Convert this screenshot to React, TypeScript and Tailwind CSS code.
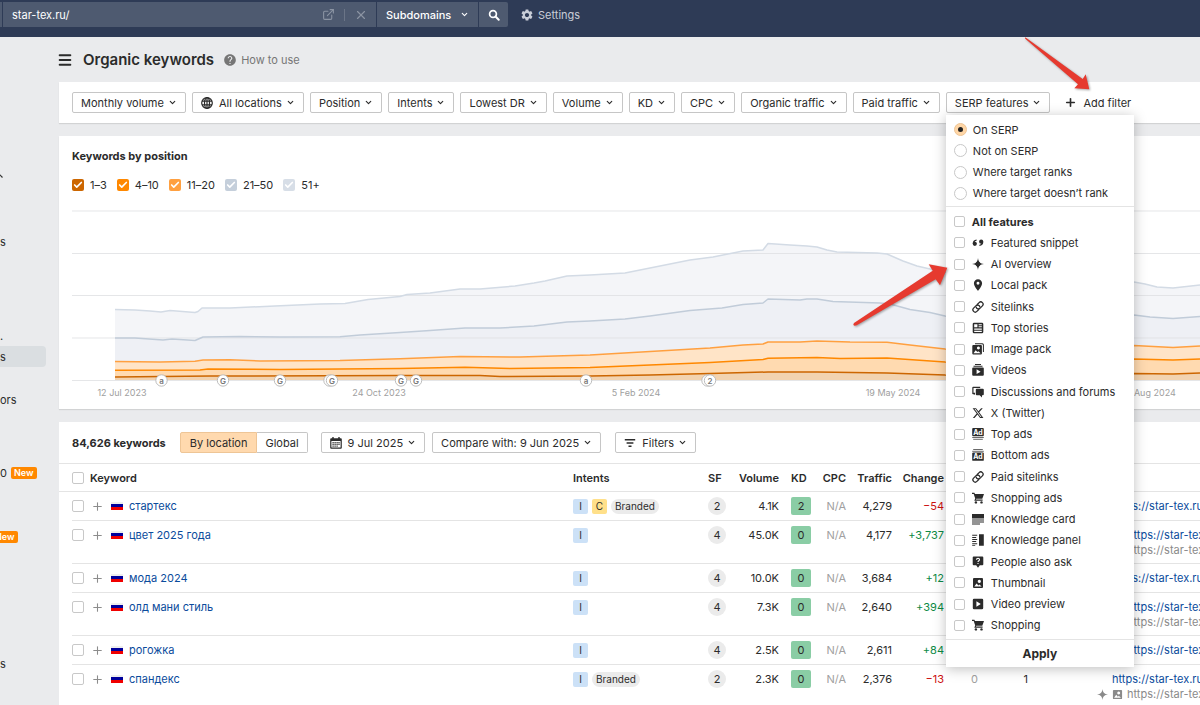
import { useState } from "react";
import type { ReactNode } from "react";
import { Check, ChevronDown, ExternalLink, Menu, Plus, X } from "lucide-react";
import { FaXTwitter } from "react-icons/fa6";
import { MdHelp, MdLocationOn, MdSettings } from "react-icons/md";
import { clsx } from "clsx";

type Row = {
  keyword: string;
  intents: string[];
  branded?: boolean;
  sf: number;
  volume: string;
  kd: number;
  traffic: string;
  change: string;
  tall?: boolean;
  urlIndent?: boolean;
};

const ROWS: Row[] = [
  { keyword: "стартекс", intents: ["I", "C"], branded: true, sf: 2, volume: "4.1K", kd: 2, traffic: "4,279", change: "−54" },
  { keyword: "цвет 2025 года", intents: ["I"], sf: 4, volume: "45.0K", kd: 0, traffic: "4,177", change: "+3,737", tall: true, urlIndent: true },
  { keyword: "мода 2024", intents: ["I"], sf: 4, volume: "10.0K", kd: 0, traffic: "3,684", change: "+12" },
  { keyword: "олд мани стиль", intents: ["I"], sf: 4, volume: "7.3K", kd: 0, traffic: "2,640", change: "+394", tall: true, urlIndent: true },
  { keyword: "рогожка", intents: ["I"], sf: 4, volume: "2.5K", kd: 0, traffic: "2,611", change: "+84", urlIndent: true },
  { keyword: "спандекс", intents: ["I"], branded: true, sf: 2, volume: "2.3K", kd: 0, traffic: "2,376", change: "−13", tall: true },
];

const SIDE_ITEMS = [
  { text: "s", className: "mt-[44px]" },
  { text: ".", className: "mt-[73px]" },
  { text: "s", className: "rounded-r-sm bg-[#dadee1]" },
  { text: "ors", className: "mt-[22px]" },
  { text: "0", badge: true, className: "mt-[52px]" },
  { text: "", badge: true, className: "mt-[43px]" },
  { text: "s", className: "mt-[106px]" },
];

const LEGEND = [
  { label: "1–3", color: "bg-[#cc6600]" },
  { label: "4–10", color: "bg-[#ff8800]" },
  { label: "11–20", color: "bg-[#ffa040]" },
  { label: "21–50", color: "bg-[#c5cfdb]" },
  { label: "51+", color: "bg-[#d7dee7]" },
];

/* ---------- icons ---------- */

function Svg({ children, className = "h-3 w-3" }: { children: ReactNode; className?: string }) {
  return (
    <svg viewBox="0 0 12 12" fill="currentColor" className={className} aria-hidden="true">
      {children}
    </svg>
  );
}

const QuoteIcon = () => (
  <Svg>
    <circle cx="2.8" cy="6.800" r="2.100" />
    <path d="M.7 6.800C.7 4.300 2 2.800 4.600 2.600V3.800C3.200 4 2.600 4.700 2.600 5.800z" />
    <circle cx="9.200" cy="4.700" r="2.100" />
    <path d="M11.300 4.700C11.300 7.200 10 8.700 7.400 8.900V7.700C8.800 7.500 9.400 6.800 9.400 5.700z" />
  </Svg>
);

const SparkIcon = ({ className }: { className?: string }) => (
  <Svg className={className}>
    <path d="M6 0C6.500 4 8 5.500 12 6C8 6.500 6.500 8 6 12C5.500 8 4 6.500 0 6C4 5.500 5.500 4 6 0Z" />
    <circle cx="6" cy="6" r="2.200" />
  </Svg>
);

const LinkIcon = () => (
  <Svg>
    <g transform="rotate(-45 6 6)" fill="none" stroke="currentColor" strokeWidth="1.300" strokeLinecap="round">
      <path d="M4.800 8.300H2.100a2.300 2.300 0 0 1 0-4.600H5.600a2.300 2.300 0 0 1 1.900 3.400" />
      <path d="M7.200 3.700H9.900a2.300 2.300 0 0 1 0 4.600H6.400a2.300 2.300 0 0 1-1.900-3.400" />
    </g>
  </Svg>
);

const StoriesIcon = () => (
  <Svg>
    <path fillRule="evenodd" d="M2 .7h8a1.300 1.300 0 0 1 1.300 1.300v8a1.300 1.300 0 0 1-1.300 1.300H2A1.300 1.300 0 0 1 .7 10V2A1.300 1.300 0 0 1 2 .7zM2.200 2.200v3h3.200v-3zM6.600 2.200v1h3.200v-1zM6.600 4.200v1h3.200v-1zM2.200 6.500v1.200h7.600V6.500zM2.200 8.800V10h7.600V8.800z" />
  </Svg>
);

const ThumbIcon = ({ className }: { className?: string }) => (
  <Svg className={className}>
    <path fillRule="evenodd" d="M2 1h8a1 1 0 0 1 1 1v8a1 1 0 0 1-1 1H2a1 1 0 0 1-1-1V2a1 1 0 0 1 1-1zM2.300 9.600L4.600 6.400L6.400 8.400L7.400 7.400L9.700 9.600zM7.300 2.800a1.600 1.600 0 1 0 .01 0z" />
  </Svg>
);

const ImagesIcon = () => (
  <Svg>
    <path d="M3 .2h7.400A1.500 1.500 0 0 1 11.900 1.700V9h-1V2.100a.9.9 0 0 0-.9-.9H3z" />
    <path fillRule="evenodd" d="M1.300 2h7.600a1 1 0 0 1 1 1v7.600a1 1 0 0 1-1 1H1.300a1 1 0 0 1-1-1V3a1 1 0 0 1 1-1zM1.500 10.200L3.700 7.200L5.400 9L6.300 8.200L8.700 10.200zM6.400 3.600a1.500 1.500 0 1 0 .01 0z" />
  </Svg>
);

const VideosIcon = () => (
  <Svg>
    <path d="M3 0h6v1H3zM1.500 1.800h9v1h-9z" />
    <path fillRule="evenodd" d="M1.200 3.600h9.600a1 1 0 0 1 1 1v6.200a1 1 0 0 1-1 1H1.200a1 1 0 0 1-1-1V4.600a1 1 0 0 1 1-1zM4.600 5.300v4.800L8.600 7.700z" />
  </Svg>
);

const ForumsIcon = () => (
  <Svg>
    <path d="M1.200 .8h7V2H1.500v4.800H3v1.900L.3 8V1.700a.9.900 0 0 1 .9-.9z" />
    <path d="M4.800 2.700h6a1 1 0 0 1 1 1v4.600a1 1 0 0 1-1 1H10v2.200L7.700 9.300H4.800a1 1 0 0 1-1-1V3.700a1 1 0 0 1 1-1z" />
  </Svg>
);

function AdIcon({ flip }: { flip?: boolean }) {
  const y = flip ? 3.6 : 0;
  return (
    <Svg>
      <rect x="0.200" y={y} width="11.600" height="8.200" rx="0.900" />
      <text x="6" y={y + 6.6} textAnchor="middle" fontSize="7" fontWeight="700" fontFamily="Inter, sans-serif" fill="#fff">
        Ad
      </text>
      <rect x="0.200" y={flip ? 1.8 : 9} width="11.600" height="1" opacity="0.700" />
      <rect x="1.200" y={flip ? 0 : 10.8} width="9.600" height="1" opacity="0.700" />
    </Svg>
  );
}

const CartIcon = () => (
  <Svg>
    <path d="M0 .8h2.400l.6 1.300H12L10.300 6.700H4.300L3.900 7.600h6.700v1.100H2.300L3.200 6.400L1.700 1.900H0z" />
    <circle cx="3.900" cy="10.400" r="1.200" />
    <circle cx="9.500" cy="10.400" r="1.200" />
  </Svg>
);

const CardIcon = () => (
  <Svg>
    <path d="M0 1h12v4.400H0zM0 6.400h12v1H0zM0 8.400h12v1H0zM0 10.400h8v1H0z" />
  </Svg>
);

const PanelIcon = () => (
  <Svg>
    <path d="M7 .3h4.800v11.400H7zM.2 .8h5v1h-5zM.2 2.900h4v1h-4zM.2 5h5v1h-5zM.2 7.100h4v1h-4zM.2 9.200h5v1h-5zM.2 10.900h3v.8h-3z" />
  </Svg>
);

const AskIcon = () => (
  <Svg>
    <path d="M1.700 .6h8.600a1 1 0 0 1 1 1v6.600a1 1 0 0 1-1 1H7.800L6 11.700L4.200 9.200H1.700a1 1 0 0 1-1-1V1.600a1 1 0 0 1 1-1z" />
    <path d="M4.400 3.700C4.600 1.900 7.600 1.900 7.500 3.700C7.500 4.700 6 4.700 6 5.900M6 6.900v1.100" fill="none" stroke="#fff" strokeWidth="1.100" />
  </Svg>
);

const PreviewIcon = () => (
  <Svg>
    <path fillRule="evenodd" d="M2 .8h8a1.200 1.200 0 0 1 1.200 1.200v8A1.200 1.200 0 0 1 10 11.200H2A1.200 1.200 0 0 1 .8 10V2A1.200 1.200 0 0 1 2 .8zM4.400 3.300v5.400L8.800 6z" />
  </Svg>
);

const GlobeIcon = () => (
  <Svg>
    <g fill="none" stroke="currentColor" strokeWidth="1.200">
      <circle cx="6" cy="6" r="5.300" />
      <ellipse cx="6" cy="6" rx="2.500" ry="5.300" />
      <path d="M1 4.200h10M1 7.800h10M6 .7v10.600" />
    </g>
  </Svg>
);

const CalendarIcon = () => (
  <Svg>
    <path fillRule="evenodd" d="M2.300 0h1.400v1.200h4.600V0h1.400v1.200h1.100a1 1 0 0 1 1 1v8.600a1 1 0 0 1-1 1H1.200a1 1 0 0 1-1-1V2.200a1 1 0 0 1 1-1h1.100zM1.400 3.900v6.700h9.200V3.900z" />
    <path d="M2.500 5h1.200v1.200H2.500zM4.500 5h1.200v1.200H4.500zM6.500 5h1.200v1.200H6.500zM8.400 5h1.200v1.200H8.400zM2.500 6.800h1.200V8H2.500zM4.500 6.800h1.200V8H4.500zM6.500 6.800h1.200V8H6.500zM8.400 6.800h1.200V8H8.400zM2.500 8.600h1.200v1.200H2.500zM4.500 8.600h1.200v1.200H4.500zM6.500 8.600h1.200v1.200H6.500z" />
  </Svg>
);

const FilterIcon = () => (
  <Svg>
    <path d="M.8 2h10.400v1.400H.8zM2.600 5.300h6.800v1.400H2.600zM4.500 8.600h3V10h-3z" />
  </Svg>
);

const SearchIcon = () => (
  <Svg>
    <circle cx="5" cy="5" r="3.400" fill="none" stroke="currentColor" strokeWidth="1.700" />
    <path d="M7.500 7.500L10.700 10.700" stroke="currentColor" strokeWidth="2" strokeLinecap="round" />
  </Svg>
);

const FEATURES: { label: string; icon: ReactNode }[] = [
  { label: "Featured snippet", icon: <QuoteIcon /> },
  { label: "AI overview", icon: <SparkIcon /> },
  { label: "Local pack", icon: <MdLocationOn className="h-[14px] w-[14px]" /> },
  { label: "Sitelinks", icon: <LinkIcon /> },
  { label: "Top stories", icon: <StoriesIcon /> },
  { label: "Image pack", icon: <ImagesIcon /> },
  { label: "Videos", icon: <VideosIcon /> },
  { label: "Discussions and forums", icon: <ForumsIcon /> },
  { label: "X (Twitter)", icon: <FaXTwitter className="h-3 w-3" /> },
  { label: "Top ads", icon: <AdIcon /> },
  { label: "Bottom ads", icon: <AdIcon flip /> },
  { label: "Paid sitelinks", icon: <LinkIcon /> },
  { label: "Shopping ads", icon: <CartIcon /> },
  { label: "Knowledge card", icon: <CardIcon /> },
  { label: "Knowledge panel", icon: <PanelIcon /> },
  { label: "People also ask", icon: <AskIcon /> },
  { label: "Thumbnail", icon: <ThumbIcon /> },
  { label: "Video preview", icon: <PreviewIcon /> },
  { label: "Shopping", icon: <CartIcon /> },
];

/* ---------- controls ---------- */

const boxClass = "shrink-0 appearance-none rounded-[2px] border border-[#c8c8c8] bg-white checked:bg-[#ffd9ae]";

function DropButton({ children, icon }: { children: ReactNode; icon?: ReactNode }) {
  return (
    <button
      type="button"
      aria-haspopup="menu"
      className="flex h-[21px] shrink-0 items-center gap-1 rounded-[2px] border border-[#c6c6c6] bg-white px-2 whitespace-nowrap"
    >
      {icon && <span className="mr-[2px]">{icon}</span>}
      {children}
      <ChevronDown className="h-[9px] w-[9px]" strokeWidth={3} />
    </button>
  );
}

function SerpMenu() {
  const [mode, setMode] = useState("On SERP");

  return (
    <div className="absolute top-full left-0 z-20 mt-[2px] w-[188px] bg-white whitespace-nowrap shadow-[0_2px_12px_rgba(0,0,0,0.25)]">
      <div className="grid h-[92px] auto-rows-fr border-b border-[#e4e4e4] px-2 pt-1 pb-[2px]">
        {["On SERP", "Not on SERP", "Where target ranks", "Where target doesn’t rank"].map((label) => (
          <label key={label} className="flex items-center gap-[6px]">
            <input
              type="radio"
              name="serp-mode"
              checked={mode === label}
              onChange={() => setMode(label)}
              className="grid h-[13px] w-[13px] shrink-0 appearance-none place-items-center rounded-full border border-[#c8c8c8] bg-white before:h-[5px] before:w-[5px] before:rounded-full checked:border-[#eec596] checked:bg-[#ffd6a6] checked:before:bg-[#222]"
            />
            {label}
          </label>
        ))}
      </div>
      <div className="grid h-[433px] auto-rows-fr border-b border-[#e4e4e4] px-2 pt-1 pb-[3px]">
        <label className="flex items-center gap-[7px] font-bold">
          <input type="checkbox" className={clsx(boxClass, "h-[11px] w-[11px]")} />
          All features
        </label>
        {FEATURES.map((f) => (
          <label key={f.label} className="flex items-center gap-[6px]">
            <input type="checkbox" className={clsx(boxClass, "h-[11px] w-[11px]")} />
            <span className="flex w-[14px] justify-center">{f.icon}</span>
            {f.label}
          </label>
        ))}
      </div>
      <button type="button" className="h-[27px] w-full text-center text-[12px] font-bold">
        Apply
      </button>
    </div>
  );
}

/* ---------- chart ---------- */

const TOTAL = "115,309.5 135,310 150,311 161,312 170,310.5 195,312.5 198,311.5 202,308 230,308 275,306 320,304 345,303.5 368,299.5 400,296.5 407,294.5 430,293 460,289 480,289 515,286 534,283 545,281 567,276 590,275 625,273 650,268 690,260 713,257 743,251 763,250 768,243.5 790,245 807,246 817,247 827,250 837,252 877,253 887,254 903,261 917,266 930,269 945,272 1040,290 1134,282 1145,284 1157,287 1173,288 1200,285";
const TOP50 = "115,338 135,338 163,340 172,339 195,340.5 203,337 240,336.5 280,337 340,336.7 360,335 400,332.5 430,330.5 465,328 500,328 534,326 567,322 590,321 625,319 650,316 690,310.5 722,308 743,304.5 763,303 768,299 800,300 807,299 817,299 833,301.5 880,303 890,304 910,309.5 930,312.5 945,316 1040,325 1134,315 1150,317 1173,318.5 1200,316.5";
const TOP20 = "115,361.5 160,362 195,361.3 203,360 230,359.7 260,361 340,360.5 400,358.7 460,356.5 520,357 590,355 650,351.5 710,348 743,345 763,344 768,342 800,342 817,341 850,342 887,342.3 910,345 945,349 1040,352 1134,345.5 1173,347.5 1200,346";
const TOP10 = "115,370.3 200,370 208,369 280,369.5 400,368.5 465,367.3 510,368.5 590,367.5 650,365 710,362.5 763,359.5 768,358.3 817,357.5 840,358.5 887,358 945,362 1040,364 1134,359 1173,360 1200,359";
const TOP3 = "115,377 210,376 400,375.5 480,375.5 500,376.5 590,376 650,375 710,373.5 768,372 817,372 887,373 945,375 1040,376 1134,373.5 1173,374 1200,373";

const MARKERS = [
  { x: 161.5, t: "a" },
  { x: 223, t: "G" },
  { x: 280, t: "G" },
  { x: 329.5, t: "" },
  { x: 332, t: "G" },
  { x: 401, t: "G" },
  { x: 416, t: "G" },
  { x: 586, t: "a" },
  { x: 707.5, t: "" },
  { x: 710, t: "2" },
];

const DATES = [
  { x: 122, t: "12 Jul 2023" },
  { x: 379, t: "24 Oct 2023" },
  { x: 636, t: "5 Feb 2024" },
  { x: 893, t: "19 May 2024" },
  { x: 1149, t: "31 Aug 2024" },
];

const area = (line: string) => `115,380 ${line} 1200,380`;

function PositionChart() {
  return (
    <svg viewBox="72 203 1128 200" preserveAspectRatio="xMinYMin slice" className="block h-[200px] w-full" role="img" aria-label="Keywords by position">
      <polygon points={area(TOTAL)} fill="#f4f5f8" />
      <polygon points={area(TOP50)} fill="#eef0f5" />
      {[211, 253.5, 295.5, 338, 380.5].map((y) => (
        <path key={y} d={`M72 ${y}H1200`} stroke="#dfe0e2" strokeOpacity="0.8" />
      ))}
      <polygon points={area(TOP20)} fill="#ffe4c7" />
      <polygon points={area(TOP10)} fill="#ffdab0" />
      <polygon points={area(TOP3)} fill="#f2d3b0" />
      <g fill="none" strokeWidth="1.5" strokeLinejoin="round">
        <polyline points={TOTAL} stroke="#d3dbe5" />
        <polyline points={TOP50} stroke="#c1ccd9" />
        <polyline points={TOP20} stroke="#ffa040" />
        <polyline points={TOP10} stroke="#ff8800" />
        <polyline points={TOP3} stroke="#cc6600" />
      </g>
      {MARKERS.map((m) => (
        <g key={m.x}>
          <circle cx={m.x} cy="380.5" r="5.7" fill="#fff" stroke="#b5b5b5" strokeWidth="0.9" />
          <text x={m.x} y="383.5" textAnchor="middle" fontSize="8" fontWeight="600" fill="#777">
            {m.t}
          </text>
        </g>
      ))}
      {DATES.map((d) => (
        <text key={d.t} x={d.x} y="396" textAnchor="middle" fontSize="9" fill="#a0a0a0">
          {d.t}
        </text>
      ))}
    </svg>
  );
}

/* ---------- table ---------- */

function Flag() {
  return (
    <span className="flex h-2 w-3 flex-col" aria-hidden="true">
      <span className="h-[2px] bg-[#eee]" />
      <span className="h-[3px] bg-[#00009c]" />
      <span className="h-[3px] bg-[#f00000]" />
    </span>
  );
}

const cell = "border-b border-[#e4e4e4] align-top p-0";

function KeywordTable() {
  return (
    <table className="w-full table-fixed border-separate border-spacing-0 whitespace-nowrap">
      <colgroup>
        <col className="w-[13px]" />
        <col />
        <col className="w-[135px]" />
        <col className="w-[19px]" />
        <col className="w-[52px]" />
        <col className="w-[32px]" />
        <col className="w-[35px]" />
        <col className="w-[46px]" />
        <col className="w-[52px]" />
        <col className="w-[34px]" />
        <col className="w-[50px]" />
        <col className="w-[172px]" />
      </colgroup>
      <thead>
        <tr className="h-7 [&>th]:border-b [&>th]:border-[#e4e4e4] [&>th]:p-0 [&>th]:font-semibold">
          <th />
          <th className="text-left">
            <label className="flex items-center gap-[6px]">
              <input type="checkbox" className={clsx(boxClass, "h-3 w-3")} />
              Keyword
            </label>
          </th>
          <th className="text-left">Intents</th>
          <th className="text-left">SF</th>
          <th className="text-right">Volume</th>
          <th className="pl-3! text-left">KD</th>
          <th className="text-right">CPC</th>
          <th className="text-right">Traffic</th>
          <th className="text-right">Change</th>
          <th />
          <th />
          <th />
        </tr>
      </thead>
      <tbody>
        {ROWS.map((r) => (
          <tr key={r.keyword} className={r.tall ? "h-[43px]" : "h-[29px]"}>
            <td />
            <td className={cell}>
              <div className="flex h-7 items-center">
                <input type="checkbox" aria-label={r.keyword} className={clsx(boxClass, "h-3 w-3")} />
                <button type="button" aria-label="+" className="mr-[7px] ml-[7px] text-[#8c8c8c]">
                  <Plus className="h-[13px] w-[13px]" strokeWidth={2} />
                </button>
                <Flag />
                <a href="#" className="ml-[6px] text-[#0a4b9c]">{r.keyword}</a>
              </div>
            </td>
            <td className={cell}>
              <div className="flex h-7 items-center gap-1 text-[10px]">
                {r.intents.map((i) => (
                  <span
                    key={i}
                    className={clsx("flex h-[15px] w-[15px] items-center justify-center rounded-[2px]", i === "C" ? "bg-[#ffe08a]" : "bg-[#cce1f7]")}
                  >
                    {i}
                  </span>
                ))}
                {r.branded && <span className="rounded-full bg-[#ebebeb] px-1 leading-[15px]">Branded</span>}
              </div>
            </td>
            <td className={cell}>
              <div className="flex h-7 items-center">
                <span className="flex h-[18px] w-[18px] items-center justify-center rounded-full bg-[#ebebeb]">{r.sf}</span>
              </div>
            </td>
            <td className={clsx(cell, "text-right leading-7")}>{r.volume}</td>
            <td className={cell}>
              <div className="flex h-7 items-center justify-end">
                <span className="flex h-[18px] w-5 items-center justify-center rounded-[2px] bg-[#8acda5]">{r.kd}</span>
              </div>
            </td>
            <td className={clsx(cell, "text-right leading-7 text-[#a0a0a0]")}>N/A</td>
            <td className={clsx(cell, "text-right leading-7")}>{r.traffic}</td>
            <td className={clsx(cell, "text-right leading-7", r.change.startsWith("+") ? "text-[#0d8a45]" : "text-[#cc1010]")}>{r.change}</td>
            <td className={clsx(cell, "text-right leading-7 text-[#a0a0a0]")}>0</td>
            <td className={clsx(cell, "text-right leading-7")}>1</td>
            <td className={clsx(cell, "overflow-hidden")}>
              <a href="#" className={clsx("block h-[21px] leading-7 text-[#0a4b9c]", r.urlIndent ? "ml-[99px]" : "ml-[84px]")}>
                https://star-tex.ru/
              </a>
              {r.tall && (
                <div className="ml-[69px] flex h-4 items-center gap-1 text-[#8a8a8a]">
                  <SparkIcon className="h-[11px] w-[11px] shrink-0" />
                  <ThumbIcon className="h-[11px] w-[11px] shrink-0" />
                  <span>https://star-tex.ru/</span>
                </div>
              )}
            </td>
          </tr>
        ))}
      </tbody>
    </table>
  );
}

/* ---------- page ---------- */

function TopBar() {
  return (
    <header className="flex h-[37px] shrink-0 items-start bg-[#2e3b56] pt-[2px] text-white">
      <div className="flex h-[25px] gap-px">
        <span className="w-[2px] bg-[#4e5a70]" />
        <div className="flex w-[373px] items-center bg-[#4e5a70] pr-2 pl-[9px] text-[#8b94a3]">
          <input aria-label="Domain" defaultValue="star-tex.ru/" className="min-w-0 flex-1 bg-transparent text-white outline-none" />
          <ExternalLink className="h-[13px] w-[13px]" strokeWidth={2} />
          <span className="mx-[9px] h-3 w-px bg-[#6b7587]" />
          <X className="h-[14px] w-[14px]" strokeWidth={2} />
        </div>
        <button type="button" aria-haspopup="menu" className="flex w-[101px] items-center justify-between bg-[#4e5a70] px-[9px] font-medium">
          Subdomains
          <ChevronDown className="h-[9px] w-[9px]" strokeWidth={3} />
        </button>
        <button type="button" aria-label="Search" className="flex w-[29px] items-center justify-center rounded-r-[2px] bg-[#4e5a70]">
          <SearchIcon />
        </button>
      </div>
      <button type="button" className="ml-3 flex h-[25px] items-center gap-1 text-[#c9ced8]">
        <MdSettings className="h-[14px] w-[14px]" />
        Settings
      </button>
    </header>
  );
}

function Sidebar() {
  return (
    <nav className="w-[59px] shrink-0 overflow-hidden">
      <svg viewBox="0 0 6 21" className="mt-[129px] block h-[21px] w-[6px]" aria-hidden="true">
        <path d="M-3 12L0 9L2.5 11.5" fill="none" stroke="#333" strokeWidth="1.2" />
      </svg>
      {SIDE_ITEMS.map((item, i) => (
        <div key={i} className={clsx("flex h-[21px] w-[46px] items-center", item.className)}>
          {item.text}
          {item.badge && (
            <span className={clsx("rounded-[2px] bg-[#ff8800] px-[3px] text-[9px] leading-3 font-semibold text-white", item.text ? "ml-1" : "-ml-2")}>
              New
            </span>
          )}
        </div>
      ))}
    </nav>
  );
}

export default function App() {
  return (
    <div className="relative flex h-screen flex-col overflow-hidden bg-[#eaebed] font-['Inter',sans-serif] text-[11px] leading-4 text-[#2b2b2b]">
      <TopBar />
      <div className="flex min-h-0 flex-1">
        <Sidebar />
        <main className="flex min-w-0 flex-1 flex-col">
          <div className="flex h-[45px] shrink-0 items-center">
            <Menu className="-ml-[2px] h-4 w-4" strokeWidth={3} />
            <h1 className="ml-[10px] text-[15px] font-semibold">Organic keywords</h1>
            <a href="#" className="ml-[9px] flex items-center gap-1 text-[#767676]">
              <MdHelp className="h-[14px] w-[14px]" />
              How to use
            </a>
          </div>

          <section className="flex h-[41px] shrink-0 items-center gap-[6px] bg-white pl-[13px] shadow-[0_1px_1px_rgba(0,0,0,0.1)]">
            <DropButton>Monthly volume</DropButton>
            <DropButton icon={<GlobeIcon />}>All locations</DropButton>
            <DropButton>Position</DropButton>
            <DropButton>Intents</DropButton>
            <DropButton>Lowest DR</DropButton>
            <DropButton>Volume</DropButton>
            <DropButton>KD</DropButton>
            <DropButton>CPC</DropButton>
            <DropButton>Organic traffic</DropButton>
            <DropButton>Paid traffic</DropButton>
            <div className="relative">
              <DropButton>SERP features</DropButton>
              <SerpMenu />
            </div>
            <button type="button" className="ml-2 flex shrink-0 items-center gap-[6px]">
              <Plus className="h-[13px] w-[13px]" strokeWidth={3} />
              Add filter
            </button>
          </section>

          <section className="mt-[13px] shrink-0 bg-white pt-[10px] pb-[6px] pl-[13px] shadow-[0_1px_1px_rgba(0,0,0,0.1)]">
            <h2 className="leading-5 font-bold">Keywords by position</h2>
            <div className="mt-[9px] mb-2 flex h-5 items-center gap-[10px]">
              {LEGEND.map((l) => (
                <label key={l.label} className="flex items-center gap-[6px]">
                  <span className="relative h-3 w-3">
                    <input type="checkbox" defaultChecked className={clsx("block h-3 w-3 appearance-none rounded-[2px]", l.color)} />
                    <Check className="pointer-events-none absolute inset-0 m-auto h-[10px] w-[10px] text-white" strokeWidth={4} />
                  </span>
                  {l.label}
                </label>
              ))}
            </div>
            <PositionChart />
          </section>

          <section className="mt-[13px] shrink-0 bg-white">
            <div className="flex h-[42px] items-center border-b border-[#e4e4e4] pl-[13px]">
              <h2 className="font-bold">84,626 keywords</h2>
              <div className="ml-[14px] flex h-[21px]">
                <button type="button" className="rounded-l-[2px] border border-[#eec596] bg-[#ffd9ae] px-[9px]">By location</button>
                <button type="button" className="rounded-r-[2px] border border-l-0 border-[#c6c6c6] px-2">Global</button>
              </div>
              <div className="ml-[13px] flex gap-[7px]">
                <DropButton icon={<CalendarIcon />}>9 Jul 2025</DropButton>
                <DropButton>Compare with: 9 Jun 2025</DropButton>
              </div>
              <div className="ml-[14px]">
                <DropButton icon={<FilterIcon />}>Filters</DropButton>
              </div>
            </div>
            <KeywordTable />
          </section>
        </main>
      </div>

      {/* callout arrows */}
      <svg viewBox="0 0 1200 705" className="pointer-events-none absolute top-0 left-0 z-30 h-[705px] w-[1200px] drop-shadow-[1px_1px_1px_rgba(0,0,0,0.35)]" aria-hidden="true">
        <path d="M1025.3 37.3L1082.7 79L1085.7 74.3L1089.3 89.3L1074.3 88.3L1078 84.3L1025 38.5Z" fill="#e63a2f" />
        <path d="M853.3 324.5L854 323L932.7 270.7L928.7 264.3L947.3 267.7L940 285.3L935.7 279.3L856.7 325.3Q854 326.5 853.3 324.5Z" fill="#e63a2f" />
      </svg>
    </div>
  );
}
